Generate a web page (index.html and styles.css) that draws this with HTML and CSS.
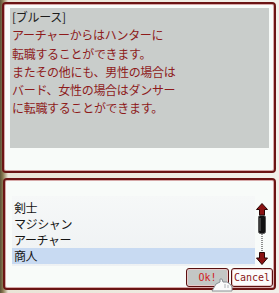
FILE: index.html
```html
<!DOCTYPE html>
<html lang="ja">
<head>
    <meta charset="UTF-8">
    <title>転職</title>
    <link rel="stylesheet" href="styles.css">
</head>
<body>
    <div class="window">
        <div class="panel panel-top">
            <div class="message">
                <div class="speaker">[ブルース]</div>
                <div>アーチャーからはハンターに</div>
                <div>転職することができます。</div>
                <div>またその他にも、男性の場合は</div>
                <div>バード、女性の場合はダンサー</div>
                <div>に転職することができます。</div>
            </div>
        </div>

        <div class="panel panel-bottom">
            <div class="select-row">
                <ul class="choices">
                    <li>剣士</li>
                    <li>マジシャン</li>
                    <li>アーチャー</li>
                    <li class="selected">商人</li>
                </ul>
                <svg class="scroll" width="12" height="62" viewBox="0 0 12 62">
                    <!-- up arrow -->
                    <path d="M6 0.5 L11.5 6.5 L8.5 6.5 L8.5 12 L3.5 12 L3.5 6.5 L0.5 6.5 Z" fill="#8a1212" stroke="#2a0404" stroke-width="1"/>
                    <!-- thumb -->
                    <rect x="2.5" y="12.5" width="7" height="18" rx="2" fill="#111" stroke="#555" stroke-width="1"/>
                    <line x1="4" y1="15" x2="4" y2="28" stroke="#666" stroke-width="1"/>
                    <!-- track -->
                    <line x1="6" y1="31" x2="6" y2="49" stroke="#222" stroke-width="1" stroke-dasharray="1 1"/>
                    <!-- down arrow -->
                    <path d="M3.5 49.5 L8.5 49.5 L8.5 55 L11.5 55 L6 61.5 L0.5 55 L3.5 55 Z" fill="#8a1212" stroke="#2a0404" stroke-width="1"/>
                </svg>
            </div>
            <div class="buttons">
                <button class="btn btn-ok">Ok!</button>
                <button class="btn btn-cancel">Cancel</button>
            </div>
            <svg class="cursor" width="22" height="14" viewBox="0 0 22 14">
                <path d="M1 13 L5 6 L9 4 L9 1 L11 1 L12 4 L16 4 L19 6 L21 9 L21 13 Z" fill="#fbfbfb" stroke="#8a8f94" stroke-width="1"/>
                <line x1="14" y1="6" x2="14" y2="10" stroke="#b0b4b8"/>
                <line x1="17" y1="7" x2="17" y2="10" stroke="#b0b4b8"/>
            </svg>
        </div>
    </div>
</body>
</html>
```

FILE: styles.css
```css
/* 全体 */
* {
    box-sizing: border-box;
}

body {
    margin: 0;
    width: 279px;
    height: 293px;
    overflow: hidden;
    background: linear-gradient(90deg, #5b5236 0px, #8a7a52 3px, #e9e4d6 8px, #f2f0ea 100%);
    font-family: "Noto Sans CJK JP", "Noto Sans", sans-serif;
}

.window {
    display: flex;
    flex-direction: column;
    gap: 5px;
    padding: 2px 3px 0 2px;
}

.panel {
    background-color: #f8fbf9;
    border: 2px solid #6b1414;
    border-radius: 4px;
    box-shadow: inset 0 0 0 1px #d6a8a8;
}

/* 上のメッセージ */
.panel-top {
    height: 171px;
    padding: 4px 5px 0 6px;
}

.message {
    background-color: #c9cdcb;
    height: 140px;
    padding: 0 2px;
    font-size: 12px;
    line-height: 18.3px;
    letter-spacing: -0.3px;
    color: #8e1b1b;
}

.speaker {
    color: #1c1c1c;
}

/* 下の選択肢 */
.panel-bottom {
    position: relative;
    height: 112px;
    margin-left: 1px;
    padding: 16px 6px 0 7px;
    display: flex;
    flex-direction: column;
}

.select-row {
    display: flex;
    align-items: flex-start;
    gap: 1px;
}

.choices {
    list-style: none;
    margin: 0;
    padding: 4px 0 0 0;
    width: 243px;
    height: 70px;
    background: linear-gradient(180deg, #f6f8f8 0%, #eef1f3 100%);
}

.choices li {
    height: 16px;
    line-height: 15px;
    padding-left: 2px;
    font-size: 12px;
    letter-spacing: -0.4px;
    color: #141414;
}

.choices li.selected {
    background-color: #c8daf2;
}

.scroll {
    margin-top: 7px;
    display: block;
}

.buttons {
    display: flex;
    justify-content: flex-end;
    gap: 2px;
    margin-top: 2px;
    margin-right: -5px;
}

.btn {
    height: 19px;
    padding: 0;
    border: 1px solid #5a1010;
    border-radius: 3px;
    font-family: "DejaVu Sans Mono", "Liberation Mono", monospace;
    font-size: 10px;
    box-shadow: inset 0 0 0 1px #e8c8c8;
}

.btn-ok {
    width: 43px;
    background-color: #c3c7c5;
    color: #d01c1c;
}

.btn-cancel {
    width: 42px;
    background-color: #fbfbfb;
    color: #8a1616;
}

.cursor {
    position: absolute;
    left: 206px;
    bottom: -4px;
}
```
